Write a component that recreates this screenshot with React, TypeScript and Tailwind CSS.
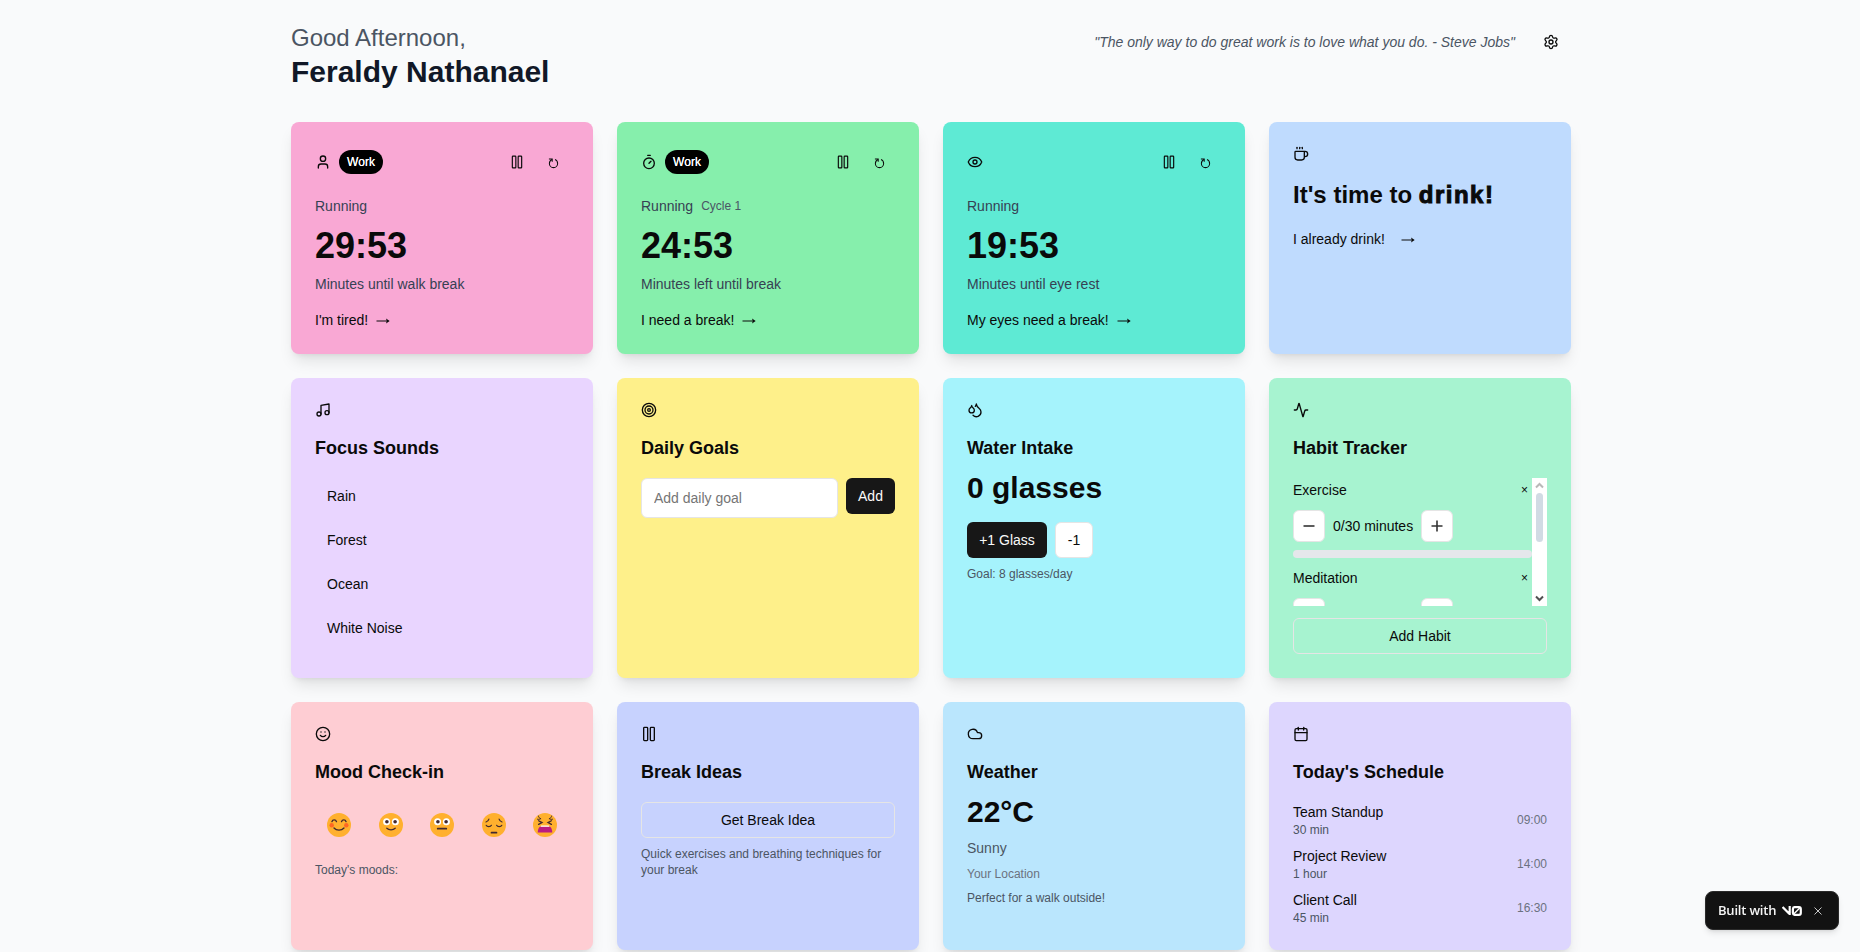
import React from "react";
import {
  Activity,
  Calendar,
  Cloud,
  Coffee,
  Droplets,
  Eye,
  Music,
  Settings,
  Smile,
  Target,
  Timer,
  User,
} from "lucide-react";

function Card({ color, children }: { color: string; children: React.ReactNode }) {
  return (
    <div className={`rounded-lg p-6 shadow-[0_10px_15px_-3px_rgba(0,0,0,0.1),0_4px_6px_-4px_rgba(0,0,0,0.1)] ${color}`}>
      {children}
    </div>
  );
}

function CardHead({ icon, title }: { icon: React.ReactNode; title: string }) {
  return (
    <>
      <div className="mb-4">{icon}</div>
      <h3 className="text-lg font-semibold">{title}</h3>
    </>
  );
}

function PauseBars({ className }: { className: string }) {
  return (
    <svg viewBox="0 0 24 24" className={className} fill="none" stroke="currentColor" strokeWidth="2">
      <rect x="4" y="2" width="6" height="20" rx="1.2" />
      <rect x="14" y="2" width="6" height="20" rx="1.2" />
    </svg>
  );
}

function ResetIcon() {
  return (
    <svg viewBox="0 0 12 12" className="mt-[3px] size-[11px]" fill="none" stroke="currentColor" strokeWidth="1.1">
      <path d="M1 1.2h3.6v3" />
      <path d="M4.4 1.6C2.5 2.4 1.5 4 1.5 6a4.5 4.5 0 0 0 9 0c0-2-1-3.7-2.8-4.4" />
    </svg>
  );
}

function Arrow() {
  return (
    <svg viewBox="0 0 14 8" className="mt-0.5 h-2 w-3.5" fill="currentColor">
      <path d="M0.5 3.5h10.5V4.5H0.5z" />
      <path d="M10 1.5 13.7 4 10 6.5l.8-2.5z" />
    </svg>
  );
}

function TimerCard(props: {
  color: string;
  icon: React.ReactNode;
  badge?: boolean;
  cycle?: string;
  time: string;
  label: string;
  action: string;
}) {
  return (
    <Card color={props.color}>
      <div className="flex h-8 items-center justify-between">
        <div className="flex items-center gap-2">
          {props.icon}
          {props.badge && (
            <span className="flex h-6 w-11 items-center justify-center rounded-full bg-black text-xs text-white [text-shadow:0_0_0.5px_#fff]">
              Work
            </span>
          )}
        </div>
        <div className="flex items-center gap-1">
          <button className="flex size-8 items-center justify-center">
            <PauseBars className="size-3.5" />
          </button>
          <button className="flex size-8 items-center justify-center">
            <ResetIcon />
          </button>
        </div>
      </div>
      <div className="mt-[18px] flex items-center gap-2 text-sm text-gray-700">
        Running
        {props.cycle && <span className="text-xs text-gray-600">{props.cycle}</span>}
      </div>
      <div className="mt-2.5 text-4xl font-bold">{props.time}</div>
      <div className="mt-2 text-sm text-gray-700">{props.label}</div>
      <button className="mt-4 flex items-center gap-2 text-sm">
        {props.action} <Arrow />
      </button>
    </Card>
  );
}

function Face({ children }: { children: React.ReactNode }) {
  return (
    <button className="flex h-[46px] w-12 items-center justify-center">
      <svg viewBox="0 0 24 24" className="size-6" fill="none" stroke="#42282f" strokeWidth="1.3" strokeLinecap="round">
        <circle cx="12" cy="12" r="12" fill="#ffb02e" stroke="none" />
        {children}
      </svg>
    </button>
  );
}

function WideEyes() {
  return (
    <g stroke="none">
      <circle cx="7.6" cy="8.7" r="3.5" fill="#fff" />
      <circle cx="16.4" cy="8.7" r="3.5" fill="#fff" />
      <circle cx="7.9" cy="8.7" r="1.8" fill="#42282f" />
      <circle cx="16.1" cy="8.7" r="1.8" fill="#42282f" />
    </g>
  );
}

function Habit({ name, progress }: { name: string; progress?: string }) {
  return (
    <div className="mb-2 pt-0.5">
      <div className="flex h-5 items-center justify-between pr-1 text-sm">
        {name}
        <button className="text-xs">×</button>
      </div>
      <div className="mt-2.5 flex items-center gap-2 text-sm">
        <button className="flex size-8 items-center justify-center rounded-md border border-neutral-200 bg-white">
          <svg viewBox="0 0 12 12" className="size-3" stroke="#333" strokeWidth="1.6">
            <path d="M0.5 6h11" />
          </svg>
        </button>
        <span className="w-20 whitespace-nowrap">{progress}</span>
        <button className="flex size-8 items-center justify-center rounded-md border border-neutral-200 bg-white">
          <svg viewBox="0 0 12 12" className="size-3" stroke="#333" strokeWidth="1.6">
            <path d="M0.5 6h11M6 0.5v11" />
          </svg>
        </button>
      </div>
      <div className="mt-2 h-2 rounded-full bg-[#e5e7eb]" />
    </div>
  );
}

const sounds = ["Rain", "Forest", "Ocean", "White Noise"];
const events = [
  ["Team Standup", "30 min", "09:00"],
  ["Project Review", "1 hour", "14:00"],
  ["Client Call", "45 min", "16:30"],
];

export default function App() {
  return (
    <div className="h-[952px] overflow-hidden bg-[#f9fafb] pt-[22px] font-['Liberation_Sans',Arial,sans-serif] text-[#0a0a0a]">
      <div className="ml-[291px] w-[1280px]">
        <header className="mb-8 flex items-start justify-between">
          <div>
            <div className="text-2xl text-[#4b5563]">Good Afternoon,</div>
            <h1 className="text-3xl font-bold text-[#111827]">Feraldy Nathanael</h1>
          </div>
          <div className="flex items-center gap-4">
            <p className="text-sm text-[#4b5563] italic">"The only way to do great work is to love what you do. - Steve Jobs"</p>
            <button className="flex size-10 items-center justify-center">
              <Settings className="size-4" />
            </button>
          </div>
        </header>

        <main className="grid grid-cols-4 grid-rows-[232px_300px_248px] gap-6">
          <TimerCard color="bg-[#f9a8d4]" icon={<User className="size-4" />} badge time="29:53" label="Minutes until walk break" action="I'm tired!" />
          <TimerCard color="bg-[#86efac]" icon={<Timer className="size-4" />} badge cycle="Cycle 1" time="24:53" label="Minutes left until break" action="I need a break!" />
          <TimerCard color="bg-[#5eead4]" icon={<Eye className="size-4" />} time="19:53" label="Minutes until eye rest" action="My eyes need a break!" />
          <Card color="bg-[#bfdbfe]">
            <Coffee className="size-4" />
            <h2 className="mt-[17px] text-2xl font-bold">
              It's time to <span className="tracking-[1.5px] [-webkit-text-stroke:1px_#0a0a0a]">drink!</span>
            </h2>
            <button className="mt-[18px] flex items-center gap-4 text-sm">
              I already drink! <Arrow />
            </button>
          </Card>

          <Card color="bg-[#e9d5ff]">
            <CardHead icon={<Music className="size-4" />} title="Focus Sounds" />
            <div className="mt-4 flex flex-col gap-2">
              {sounds.map((s) => (
                <button key={s} className="h-9 px-3 text-left text-sm">{s}</button>
              ))}
            </div>
          </Card>
          <Card color="bg-[#fef08a]">
            <CardHead icon={<Target className="size-4" />} title="Daily Goals" />
            <div className="mt-4 flex items-start gap-2">
              <input
                placeholder="Add daily goal"
                className="h-10 min-w-0 flex-1 rounded-md border border-neutral-200 bg-white px-3 text-sm placeholder:text-[#757575]"
              />
              <button className="h-9 w-[49px] rounded-md bg-[#171717] text-sm text-[#fafafa]">Add</button>
            </div>
          </Card>
          <Card color="bg-[#a5f3fc]">
            <CardHead icon={<Droplets className="size-4" />} title="Water Intake" />
            <div className="mt-2 text-3xl font-bold">0 glasses</div>
            <div className="mt-4 flex gap-2 text-sm">
              <button className="h-9 w-20 rounded-md bg-[#171717] text-[#fafafa]">+1 Glass</button>
              <button className="h-9 w-[38px] rounded-md border border-neutral-200 bg-white">-1</button>
            </div>
            <p className="mt-2 text-xs text-[#4b5563]">Goal: 8 glasses/day</p>
          </Card>
          <Card color="bg-[#a7f3d0]">
            <CardHead icon={<Activity className="size-4" />} title="Habit Tracker" />
            <div className="mt-4 flex h-32 overflow-hidden">
              <div className="h-32 flex-1 overflow-hidden">
                <Habit name="Exercise" progress="0/30 minutes" />
                <Habit name="Meditation" />
              </div>
              <div className="flex w-[15px] flex-col items-center bg-white">
                <svg viewBox="0 0 15 15" className="size-[15px]" fill="none" stroke="#b9b9b9" strokeWidth="2">
                  <path d="M4 9.5 7.5 6 11 9.5" />
                </svg>
                <div className="h-[49px] w-[7px] rounded-full bg-[#d1dbe4]" />
                <svg viewBox="0 0 15 15" className="mt-auto size-[15px]" fill="none" stroke="#505050" strokeWidth="2">
                  <path d="M4 5.5 7.5 9 11 5.5" />
                </svg>
              </div>
            </div>
            <button className="mt-3 h-9 w-full rounded-md border border-neutral-200 text-sm">Add Habit</button>
          </Card>

          <Card color="bg-[#fecdd3]">
            <CardHead icon={<Smile className="size-4" />} title="Mood Check-in" />
            <div className="mt-4 flex justify-between">
              <Face>
                <g fill="#ff6723" stroke="none">
                  <circle cx="4.7" cy="12.2" r="2.2" />
                  <circle cx="19.3" cy="12.2" r="2.2" />
                </g>
                <path d="M4.9 8.7c.8-2.4 3.8-2.4 4.6 0M14.5 8.7c.8-2.4 3.8-2.4 4.6 0M7 15c2.6 2.9 7.4 2.9 10 0" />
              </Face>
              <Face>
                <WideEyes />
                <path d="M7.8 15.3c2.1 2 6.3 2 8.4 0" />
              </Face>
              <Face>
                <WideEyes />
                <path d="M7.7 15.7h8.6" strokeWidth="1.7" />
              </Face>
              <Face>
                <path d="M4.2 12.3c.8 1.7 4.3 1.7 5.2 0M14.6 12.3c.9 1.7 4.4 1.7 5.2 0M4 9c1.4-.4 2.5-1.3 2.9-2.8M20 9c-1.4-.4-2.5-1.3-2.9-2.8" strokeWidth="1.2" />
                <path d="M9.5 19.7h5" strokeWidth="1.7" />
              </Face>
              <Face>
                <path d="M5.4 3c.2 1.4.8 2.3 2.3 2.6M18.6 3c-.2 1.4-.8 2.3-2.3 2.6M4.4 6.2c1 .3 2 .3 2.9-.1M19.6 6.2c-1 .3-2 .3-2.9-.1" strokeWidth="0.9" />
                <path d="M5.6 7.8 9 9.6l-3.4 1.8M18.4 7.8 15 9.6l3.4 1.8" />
                <path d="M7.5 13.6h9c1.4 0 2.6 2.4 2.8 6H4.7c.2-3.6 1.4-6 2.8-6z" fill="#bb1d80" stroke="none" />
                <path d="M8.3 13.2h7.4" stroke="#fff" strokeWidth="1.3" />
              </Face>
            </div>
            <p className="mt-3.5 text-xs text-[#4b5563]">Today's moods:</p>
          </Card>
          <Card color="bg-[#c7d2fe]">
            <CardHead icon={<PauseBars className="size-4" />} title="Break Ideas" />
            <button className="mt-4 h-9 w-full rounded-md border border-neutral-200 text-sm">Get Break Idea</button>
            <p className="mt-2 text-xs text-[#4b5563]">Quick exercises and breathing techniques for your break</p>
          </Card>
          <Card color="bg-[#bae6fd]">
            <CardHead icon={<Cloud className="size-4" />} title="Weather" />
            <div className="mt-2 text-3xl font-bold">22°C</div>
            <p className="mt-2 text-sm text-[#4b5563]">Sunny</p>
            <p className="mt-2 text-xs text-[#6b7280]">Your Location</p>
            <p className="mt-2 text-xs text-[#4b5563]">Perfect for a walk outside!</p>
          </Card>
          <Card color="bg-[#ddd6fe]">
            <CardHead icon={<Calendar className="size-4" />} title="Today's Schedule" />
            <div className="mt-4 flex flex-col gap-2">
              {events.map(([name, length, at]) => (
                <div key={name} className="flex items-center justify-between">
                  <div>
                    <div className="text-sm">{name}</div>
                    <div className="text-xs text-[#4b5563]">{length}</div>
                  </div>
                  <div className="text-xs text-[#6b7280]">{at}</div>
                </div>
              ))}
            </div>
          </Card>
        </main>
      </div>

      <div className="fixed right-[21px] bottom-[22px] flex h-[39px] w-[134px] items-center rounded-lg border border-[#2a2a2a] bg-[#121212] pl-3 font-['Open_Sans',sans-serif] text-[13px] font-semibold text-[#f5f5f5] shadow-md">
        <span className="w-[60px] whitespace-nowrap tracking-[-0.2px]">Built with</span>
        <svg viewBox="0 0 20 10" className="ml-1 h-[10px] w-5" fill="none" stroke="#fff" strokeWidth="2.2">
          <path d="M0.6 1l6.4 6.6M7.7 0v9M12.5 1.2H17a1.8 1.8 0 0 1 1.8 1.8v4A1.8 1.8 0 0 1 17 8.8h-4.5A1.8 1.8 0 0 1 10.9 7V3a1.8 1.8 0 0 1 1.6-1.8z" />
          <path d="M11.5 8.3l6.5-6.5" strokeWidth="1.5" />
        </svg>
        <svg viewBox="0 0 8 8" className="ml-3 size-2" stroke="#c8c8c8" strokeWidth="1">
          <path d="M.5.5l7 7M7.5.5l-7 7" />
        </svg>
      </div>
    </div>
  );
}
